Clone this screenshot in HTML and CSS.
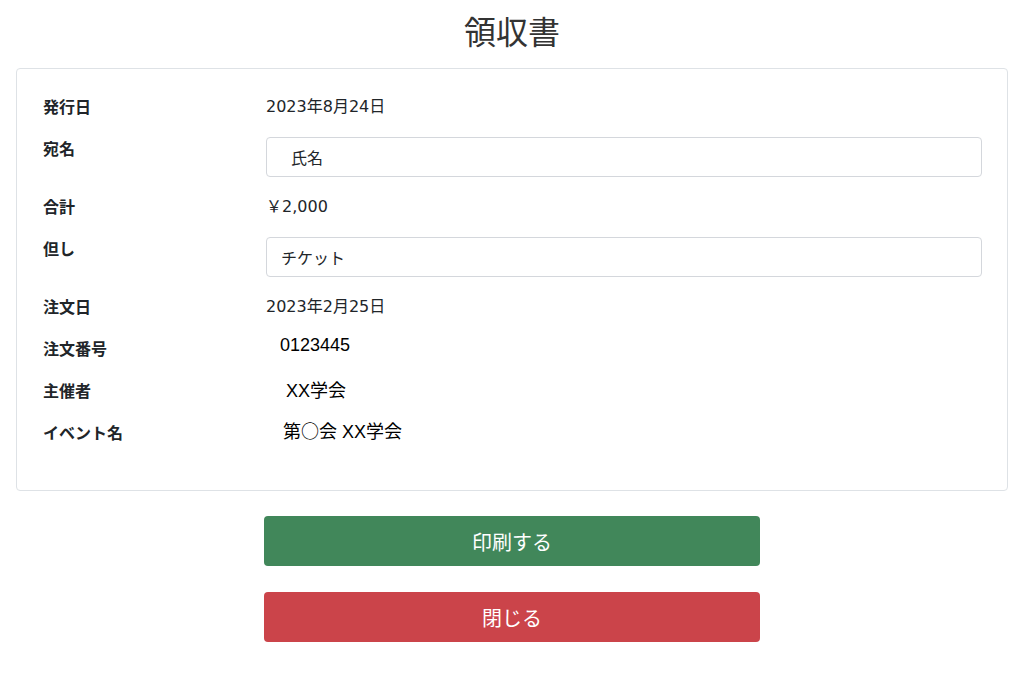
FILE: index.html
```html
<!DOCTYPE html>
<html lang="ja">
  <head>
    <meta charset="UTF-8" />
    <meta name="viewport" content="width=device-width, initial-scale=1.0" />
    <title>領収書</title>
    <link rel="stylesheet" href="styles.css">
  </head>
  <body>
    <h1 class="title">領収書</h1>

    <div class="receipt-card">
      <div class="row">
        <div class="label">発行日</div>
        <div class="value">2023年8月24日</div>
      </div>
      <div class="row">
        <div class="label">宛名</div>
        <div class="value">
          <input type="text" class="form-input indent" value="氏名" />
        </div>
      </div>
      <div class="row">
        <div class="label">合計</div>
        <div class="value">￥2,000</div>
      </div>
      <div class="row">
        <div class="label">但し</div>
        <div class="value">
          <input type="text" class="form-input" value="チケット" />
        </div>
      </div>
      <div class="row">
        <div class="label">注文日</div>
        <div class="value">2023年2月25日</div>
      </div>
      <div class="row">
        <div class="label">注文番号</div>
        <div class="value plain order-no">0123445</div>
      </div>
      <div class="row">
        <div class="label">主催者</div>
        <div class="value plain organizer">XX学会</div>
      </div>
      <div class="row">
        <div class="label">イベント名</div>
        <div class="value plain event">第<span class="cjk">○</span>会 XX学会</div>
      </div>
    </div>

    <div class="actions">
      <button class="btn btn-print" onclick="window.print()">印刷する</button>
      <button class="btn btn-close" onclick="window.close()">閉じる</button>
    </div>
  </body>
</html>
```

FILE: styles.css
```css
body {
  font-family: "Noto Sans CJK JP", "Noto Sans", sans-serif;
  color: #212529;
  margin: 0;
  padding: 0 16px;
  background-color: white;
}
.title {
  text-align: center;
  font-size: 32px;
  font-weight: 400;
  line-height: 40px;
  margin: 10px 0 18px;
  color: #333;
}
.receipt-card {
  border: 1px solid #dee2e6;
  border-radius: 4px;
  padding: 26px 25px 27px 25px;
}
.row {
  display: grid;
  grid-template-columns: 224px 1fr;
  align-items: start;
  margin-bottom: 18px;
}
.label {
  font-size: 16px;
  font-weight: 700;
  line-height: 23px;
  padding-left: 1px;
  padding-bottom: 1px;
}
.value {
  font-family: "DejaVu Sans", "Noto Sans CJK JP", sans-serif;
  font-size: 16px;
  line-height: 23px;
}
.value.plain {
  font-family: "Liberation Sans", "Noto Sans CJK JP", sans-serif;
  font-size: 18px;
  color: #000;
}
.cjk {
  font-family: "Noto Sans CJK JP", sans-serif;
}
.order-no {
  padding-left: 14px;
  margin-top: -3px;
}
.organizer {
  padding-left: 20px;
  margin-top: 1px;
}
.event {
  padding-left: 17px;
  margin-top: -2px;
}
.form-input {
  display: block;
  width: 100%;
  box-sizing: border-box;
  height: 40px;
  padding: 6px 14px;
  font-family: "Noto Sans CJK JP", sans-serif;
  font-size: 16px;
  color: #212529;
  border: 1px solid #d4d7dc;
  border-radius: 4px;
  background-color: white;
}
.form-input.indent {
  padding-left: 24px;
}
.actions {
  display: flex;
  flex-direction: column;
  align-items: center;
  gap: 26px;
  margin-top: 25px;
}
.btn {
  width: 496px;
  height: 50px;
  border: none;
  border-radius: 4px;
  color: white;
  font-family: inherit;
  font-size: 20px;
  cursor: pointer;
}
.btn-print {
  background-color: #41875a;
}
.btn-close {
  background-color: #cb444a;
}
```
